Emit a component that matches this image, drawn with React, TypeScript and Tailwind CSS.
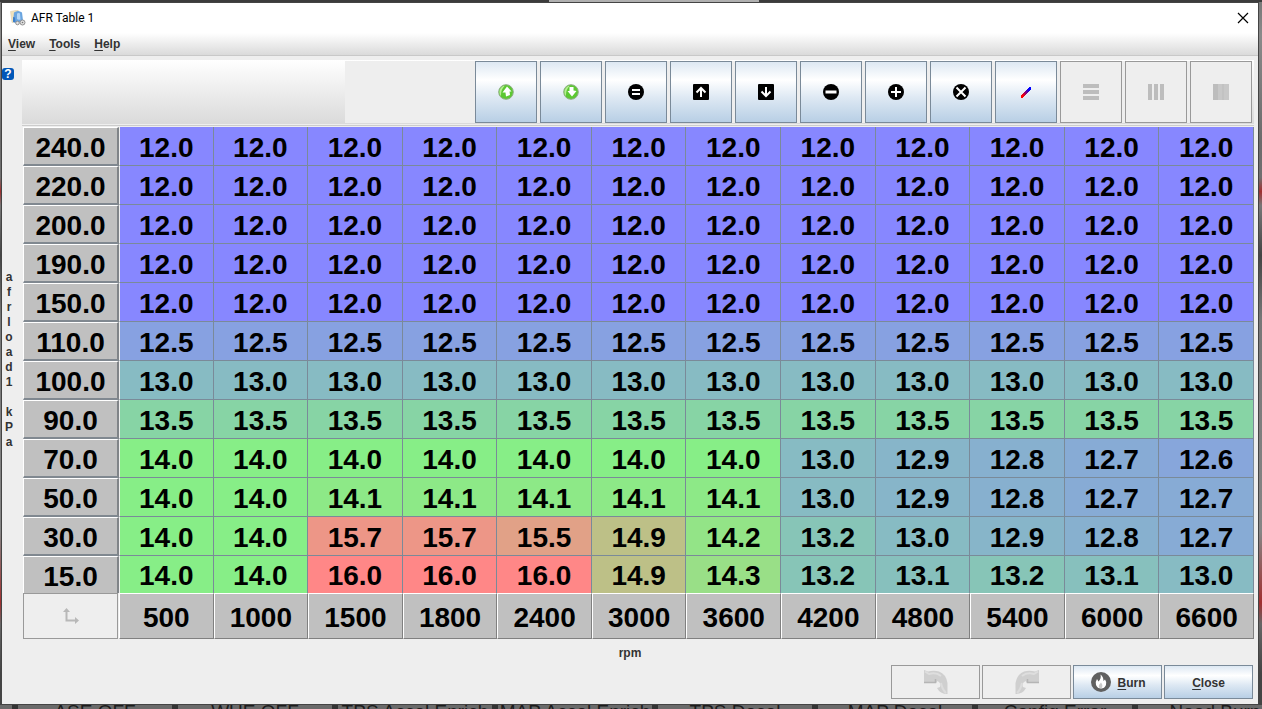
import React from 'react'

const loads = ['240.0', '220.0', '200.0', '190.0', '150.0', '110.0', '100.0', '90.0', '70.0', '50.0', '30.0', '15.0']
const rpms = [500, 1000, 1500, 1800, 2400, 3000, 3600, 4200, 4800, 5400, 6000, 6600]

const flat = (value: number) => rpms.map(() => value)

const afr: number[][] = [
  flat(12),
  flat(12),
  flat(12),
  flat(12),
  flat(12),
  flat(12.5),
  flat(13),
  flat(13.5),
  [14, 14, 14, 14, 14, 14, 14, 13, 12.9, 12.8, 12.7, 12.6],
  [14, 14, 14.1, 14.1, 14.1, 14.1, 14.1, 13, 12.9, 12.8, 12.7, 12.7],
  [14, 14, 15.7, 15.7, 15.5, 14.9, 14.2, 13.2, 13, 12.9, 12.8, 12.7],
  [14, 14, 16, 16, 16, 14.9, 14.3, 13.2, 13.1, 13.2, 13.1, 13],
]

const indicators = [
  'ASE OFF', 'WUE OFF', 'TPS Accel Enrich', 'MAP Accel Enrich',
  'TPS Decel', 'MAP Decel', 'Config Error', 'Need Burn',
]

// blue (rich) -> green -> red (lean)
function cellColor(value: number) {
  const t = (value - 12) / 4
  if (t <= 0.5) {
    const k = t * 2
    return `rgb(135, ${Math.round(135 + 103 * k)}, ${Math.round(255 - 120 * k)})`
  }
  const k = t * 2 - 1
  return `rgb(${Math.round(135 + 120 * k)}, ${Math.round(238 - 103 * k)}, 135)`
}

const metal =
  'border border-[#7a8a99] bg-[linear-gradient(#dde8f3,#ffffff_30%,#dde8f3_60%,#b8cfe5)]'
const disabledMetal = 'border border-[#999999] bg-[#eeeeee]'

function GreenArrow({ down = false }: { down?: boolean }) {
  return (
    <svg width="16" height="16" viewBox="0 0 16 16">
      <circle cx="8" cy="8" r="7.3" fill="#5cc832" stroke="#8fae84" strokeWidth="1" />
      <path d="M3 12.5A7 7 0 0 1 5 2L6.5 2Q2.500 6 3 12.5" fill="#b5ee92" />
      {down ? (
        <path d="M6.500 3h4v3.500l3 .5-4.500 5.500-4.500-5.500h2z" fill="#fff" />
      ) : (
        <path d="M9 2.500l4.500 5h-2L12 11l-4 1.500-.5-4h-3z" fill="#fff" />
      )}
    </svg>
  )
}

function RoundIcon({ d, width = 2 }: { d: string; width?: number }) {
  return (
    <svg width="16" height="16" viewBox="0 0 16 16">
      <circle cx="8" cy="8" r="8" />
      <path d={d} stroke="#fff" strokeWidth={width} fill="none" />
    </svg>
  )
}

function SquareArrow({ down = false }: { down?: boolean }) {
  return (
    <svg width="16" height="16" viewBox="0 0 16 16">
      <rect width="16" height="16" rx="1" />
      <path
        d={down ? 'M8 3v9M3.500 7.500L8 12l4.500-4.500' : 'M8 13V4M3.500 8.500L8 4l4.500 4.500'}
        stroke="#fff"
        strokeWidth="2"
        fill="none"
      />
    </svg>
  )
}

function PencilIcon() {
  return (
    <svg width="16" height="16" viewBox="0 0 16 16">
      <defs>
        <linearGradient id="pen" x1="0" y1="1" x2="1" y2="0">
          <stop offset="0.2" stopColor="#ff0000" />
          <stop offset="0.8" stopColor="#0000ff" />
        </linearGradient>
      </defs>
      <path
        d="M3 11h1v-1h1v-1h1v-1h1v-1h1v-1h1v-1h1v-1h1v-1h2v3h-1v1h-1v1h-1v1h-1v1h-1v1h-1v1h-1v1h-1v1h-2z"
        fill="url(#pen)"
      />
    </svg>
  )
}

function RowsIcon() {
  return (
    <svg width="16" height="16" viewBox="0 0 16 16">
      <path d="M0 0h16v4H0zM0 6h16v4H0zM0 12h16v4H0z" fill="#bdbdbd" />
    </svg>
  )
}

function ColumnsIcon() {
  return (
    <svg width="16" height="16" viewBox="0 0 16 16">
      <path d="M0 0h4v16H0zM6 0h4v16H6zM12 0h4v16h-4z" fill="#bdbdbd" />
    </svg>
  )
}

function BlockIcon() {
  return (
    <svg width="16" height="16" viewBox="0 0 16 16">
      <path d="M0 0h16v16H0z" fill="#c8c8c8" />
      <path d="M0 0h5v16H0z" fill="#bdbdbd" />
      <path d="M9 0h2v16H9z" fill="#c2c2c2" />
    </svg>
  )
}

function UndoIcon({ flip = false }: { flip?: boolean }) {
  return (
    <svg width="24" height="24" viewBox="0 0 24 24" className={flip ? '-scale-x-100' : ''}>
      <path
        d="M0 0l4 1.500Q10 0 15 1.500 22 4 23.500 13V24Q16 24 13 18l3-1q1.500-4-2.500-6l-1.500 2H0z"
        fill="#cfcfcf"
      />
      <path d="M1 1.500l4 2.500q7-2 12 2" stroke="#dedede" strokeWidth="2" fill="none" />
      <path d="M0 12.500h11.500V9" stroke="#b5b5b5" strokeWidth="1.500" fill="none" />
      <path d="M17 13q1 6 5 10" stroke="#dcdcdc" strokeWidth="2" fill="none" />
    </svg>
  )
}

function BurnIcon() {
  return (
    <svg width="20" height="20" viewBox="0 0 20 20">
      <circle cx="10" cy="10" r="10" fill="#606060" />
      <path
        d="M9.500 2.500Q12.500 4.500 12.500 9L14 7.500Q16 10 15 13 13.500 16.500 10 16.500T5 13Q4 10 6 7l1.500 2.500Q10.500 6.500 9.500 2.500z"
        fill="#fff"
      />
      <path d="M10 10.500q2.500 3 .500 6Q7 16 8 13z" fill="#c9c9c9" />
    </svg>
  )
}

function AxesIcon() {
  return (
    <svg width="16" height="16" viewBox="0 0 16 16">
      <path d="M3.500 3v9.500H13" stroke="#b8b8b8" strokeWidth="2" fill="none" />
      <path d="M0 4l3.500-4L7 4zM12 9l4 3.500-4 3.500z" fill="#b8b8b8" />
    </svg>
  )
}

function AppIcon() {
  return (
    <svg width="16" height="16" viewBox="0 0 16 16">
      <path d="M.5 1.500L8 0l3 11-9 1.500z" fill="#f1e2bb" stroke="#d9cba8" strokeWidth="0.500" />
      <path d="M4 2.500q4-3 8 0l1 8q-5 3-10 1.500z" fill="#6aa5e0" />
      <path d="M7 3.500q2-1 3 0l.500 6Q8 10 7 9z" fill="#b4d6f5" />
      <path d="M3 7l2 .500.500 5L3 12z" fill="#3f7fc8" />
      <circle cx="7.500" cy="13" r="1.800" fill="#e6e6e6" stroke="#909090" />
      <circle cx="12.500" cy="12.500" r="2.500" fill="#e0e0e0" stroke="#909090" />
      <circle cx="12.500" cy="12.500" r="0.800" fill="#777" />
    </svg>
  )
}

const tools = [
  { label: 'Increment', icon: <GreenArrow /> },
  { label: 'Decrement', icon: <GreenArrow down /> },
  { label: 'Set to value', icon: <RoundIcon d="M4 6h8M4 10h8" /> },
  { label: 'Increase', icon: <SquareArrow /> },
  { label: 'Decrease', icon: <SquareArrow down /> },
  { label: 'Subtract', icon: <RoundIcon d="M2.500 8h11" width={3} /> },
  { label: 'Add', icon: <RoundIcon d="M8 3v10M3 8h10" /> },
  { label: 'Multiply', icon: <RoundIcon d="M3.500 3.500l9 9M12.500 3.500l-9 9" /> },
  { label: 'Interpolate', icon: <PencilIcon /> },
  { label: 'Fill rows', icon: <RowsIcon />, disabled: true },
  { label: 'Fill columns', icon: <ColumnsIcon />, disabled: true },
  { label: 'Fill block', icon: <BlockIcon />, disabled: true },
]

function Toolbar() {
  return (
    <div className="flex bg-[linear-gradient(#ffffff,#dadada)] py-px pr-0.5">
      <div className="ml-auto flex gap-[3px] bg-[#eeeeee] pl-[130px]">
        {tools.map((tool) => (
          <button
            key={tool.label}
            type="button"
            aria-label={tool.label}
            disabled={tool.disabled}
            className={`flex h-[62px] w-[62px] items-center justify-center ${tool.disabled ? disabledMetal : metal}`}
          >
            {tool.icon}
          </button>
        ))}
      </div>
    </div>
  )
}

function AfrTable() {
  return (
    <table className="w-full table-fixed border-separate border-spacing-0 text-center text-[28px] font-bold text-black">
      <colgroup>
        <col className="w-24" />
        {rpms.map((rpm) => (
          <col key={rpm} />
        ))}
      </colgroup>
      <tbody>
        {afr.map((row, i) => {
          const last = i === afr.length - 1
          return (
            <tr key={loads[i]}>
              <th
                scope="row"
                className={`border-t border-r-2 border-l border-t-white border-r-[#808488] border-l-white bg-[#c0c0c0] p-0 pt-[3px] leading-[33px] ${last ? '' : 'border-b-2 border-b-[#808890]'}`}
              >
                {loads[i]}
              </th>
              {row.map((value, j) => (
                <td
                  key={j}
                  className={`border-r border-[#7a8a99] p-0 pt-[3px] ${last ? 'leading-[34px]' : 'border-b leading-[35px]'} ${j === 0 ? 'border-l border-l-[#eeeeee]' : ''}`}
                  style={{ backgroundColor: cellColor(value) }}
                >
                  {value.toFixed(1)}
                </td>
              ))}
            </tr>
          )
        })}
      </tbody>
      <tfoot>
        <tr className="leading-10">
          <td className="p-0 pr-px">
            <button
              type="button"
              disabled
              aria-label="Edit axes"
              className={`flex h-[46px] w-full items-center justify-center ${disabledMetal}`}
            >
              <AxesIcon />
            </button>
          </td>
          {rpms.map((rpm) => (
            <th
              key={rpm}
              scope="col"
              className="border border-t-white border-r-[#808080] border-b-[#808080] border-l-white bg-[#c0c0c0] p-0 pt-1"
            >
              {rpm}
            </th>
          ))}
        </tr>
      </tfoot>
    </table>
  )
}

function App() {
  return (
    <div className="flex min-h-screen flex-col bg-[linear-gradient(#777777,#8a8a8a_5%,#6b6b6b_20%,#707070_25%,#a03030_27%,#777777_29%,#444444_36%,#777777_45%,#858585_75%,#a03030_85%,#666666_88%,#444444_95%)] font-['Liberation_Sans',Arial,sans-serif] text-xs text-[#333333]">
      <div className="flex h-0.5 bg-[#3c3c3c]">
        <div className="ml-[43.5%] w-1/6 bg-[#b0b0b0]" />
      </div>

      <div className="mr-[3px] ml-px flex flex-grow flex-col border border-[#444444] bg-[#eeeeee]">
        <header className="flex h-[30px] items-center bg-white pr-[9px] pl-2">
          <AppIcon />
          <h1 className="ml-[5px] font-[Roboto,sans-serif] text-xs text-black">AFR Table 1</h1>
          <button type="button" aria-label="Close window" className="ml-auto">
            <svg width="12" height="12" viewBox="0 0 12 12">
              <path d="M1 1l10 10M11 1L1 11" stroke="#000" strokeWidth="1.200" />
            </svg>
          </button>
        </header>

        <nav className="flex h-[23px] items-center gap-3.5 border-b border-[#c8c8c8] bg-[linear-gradient(#ffffff,#dadada)] pl-1.5 font-bold">
          <button type="button"><u className="underline-offset-2">V</u>iew</button>
          <button type="button"><u className="underline-offset-2">T</u>ools</button>
          <button type="button"><u className="underline-offset-2">H</u>elp</button>
        </nav>

        <main className="flex pt-1 pr-1">
          <div className="mr-1.5 flex w-3.5 shrink-0 flex-col pt-2">
            <button
              type="button"
              aria-label="Help"
              className="h-3 w-3 rounded-[3px] bg-[#0057b8] text-xs leading-3 font-bold text-white"
            >
              ?
            </button>
            <div className="flex flex-grow flex-col items-center justify-center font-bold leading-[15px]">
              {'afrload1 kPa'.split('').map((letter, i) => (
                <span key={i} className="h-[15px]">{letter}</span>
              ))}
            </div>
          </div>
          <div className="flex-grow">
            <Toolbar />
            <div className="mt-px border-t border-[#cccccc] pt-px pl-px">
              <AfrTable />
            </div>
          </div>
        </main>

        <p className="pt-0.5 text-center leading-6 font-bold">rpm</p>

        <footer className="mb-[5px] flex justify-end gap-0.5 pr-[5px] font-bold">
          <button type="button" disabled aria-label="Undo" className={`flex h-[34px] w-[89px] items-center justify-center ${disabledMetal}`}>
            <UndoIcon />
          </button>
          <button type="button" disabled aria-label="Redo" className={`flex h-[34px] w-[89px] items-center justify-center ${disabledMetal}`}>
            <UndoIcon flip />
          </button>
          <button type="button" className={`flex h-[34px] w-[89px] items-center justify-center gap-1.5 pl-0.5 ${metal}`}>
            <BurnIcon />
            <span className="pt-0.5"><u className="underline-offset-2">B</u>urn</span>
          </button>
          <button type="button" className={`h-[34px] w-[89px] pt-0.5 ${metal}`}>
            <u className="underline-offset-2">C</u>lose
          </button>
        </footer>
      </div>

      <div className="flex h-1 overflow-hidden bg-[#6a6a6a] pl-3 text-[19px] leading-[14px] text-[#1c1c1c]">
        {indicators.map((name) => (
          <div key={name} className="w-40 shrink-0 border-l-6 border-[#333333] text-center">
            {name}
          </div>
        ))}
      </div>
    </div>
  )
}

export default App
